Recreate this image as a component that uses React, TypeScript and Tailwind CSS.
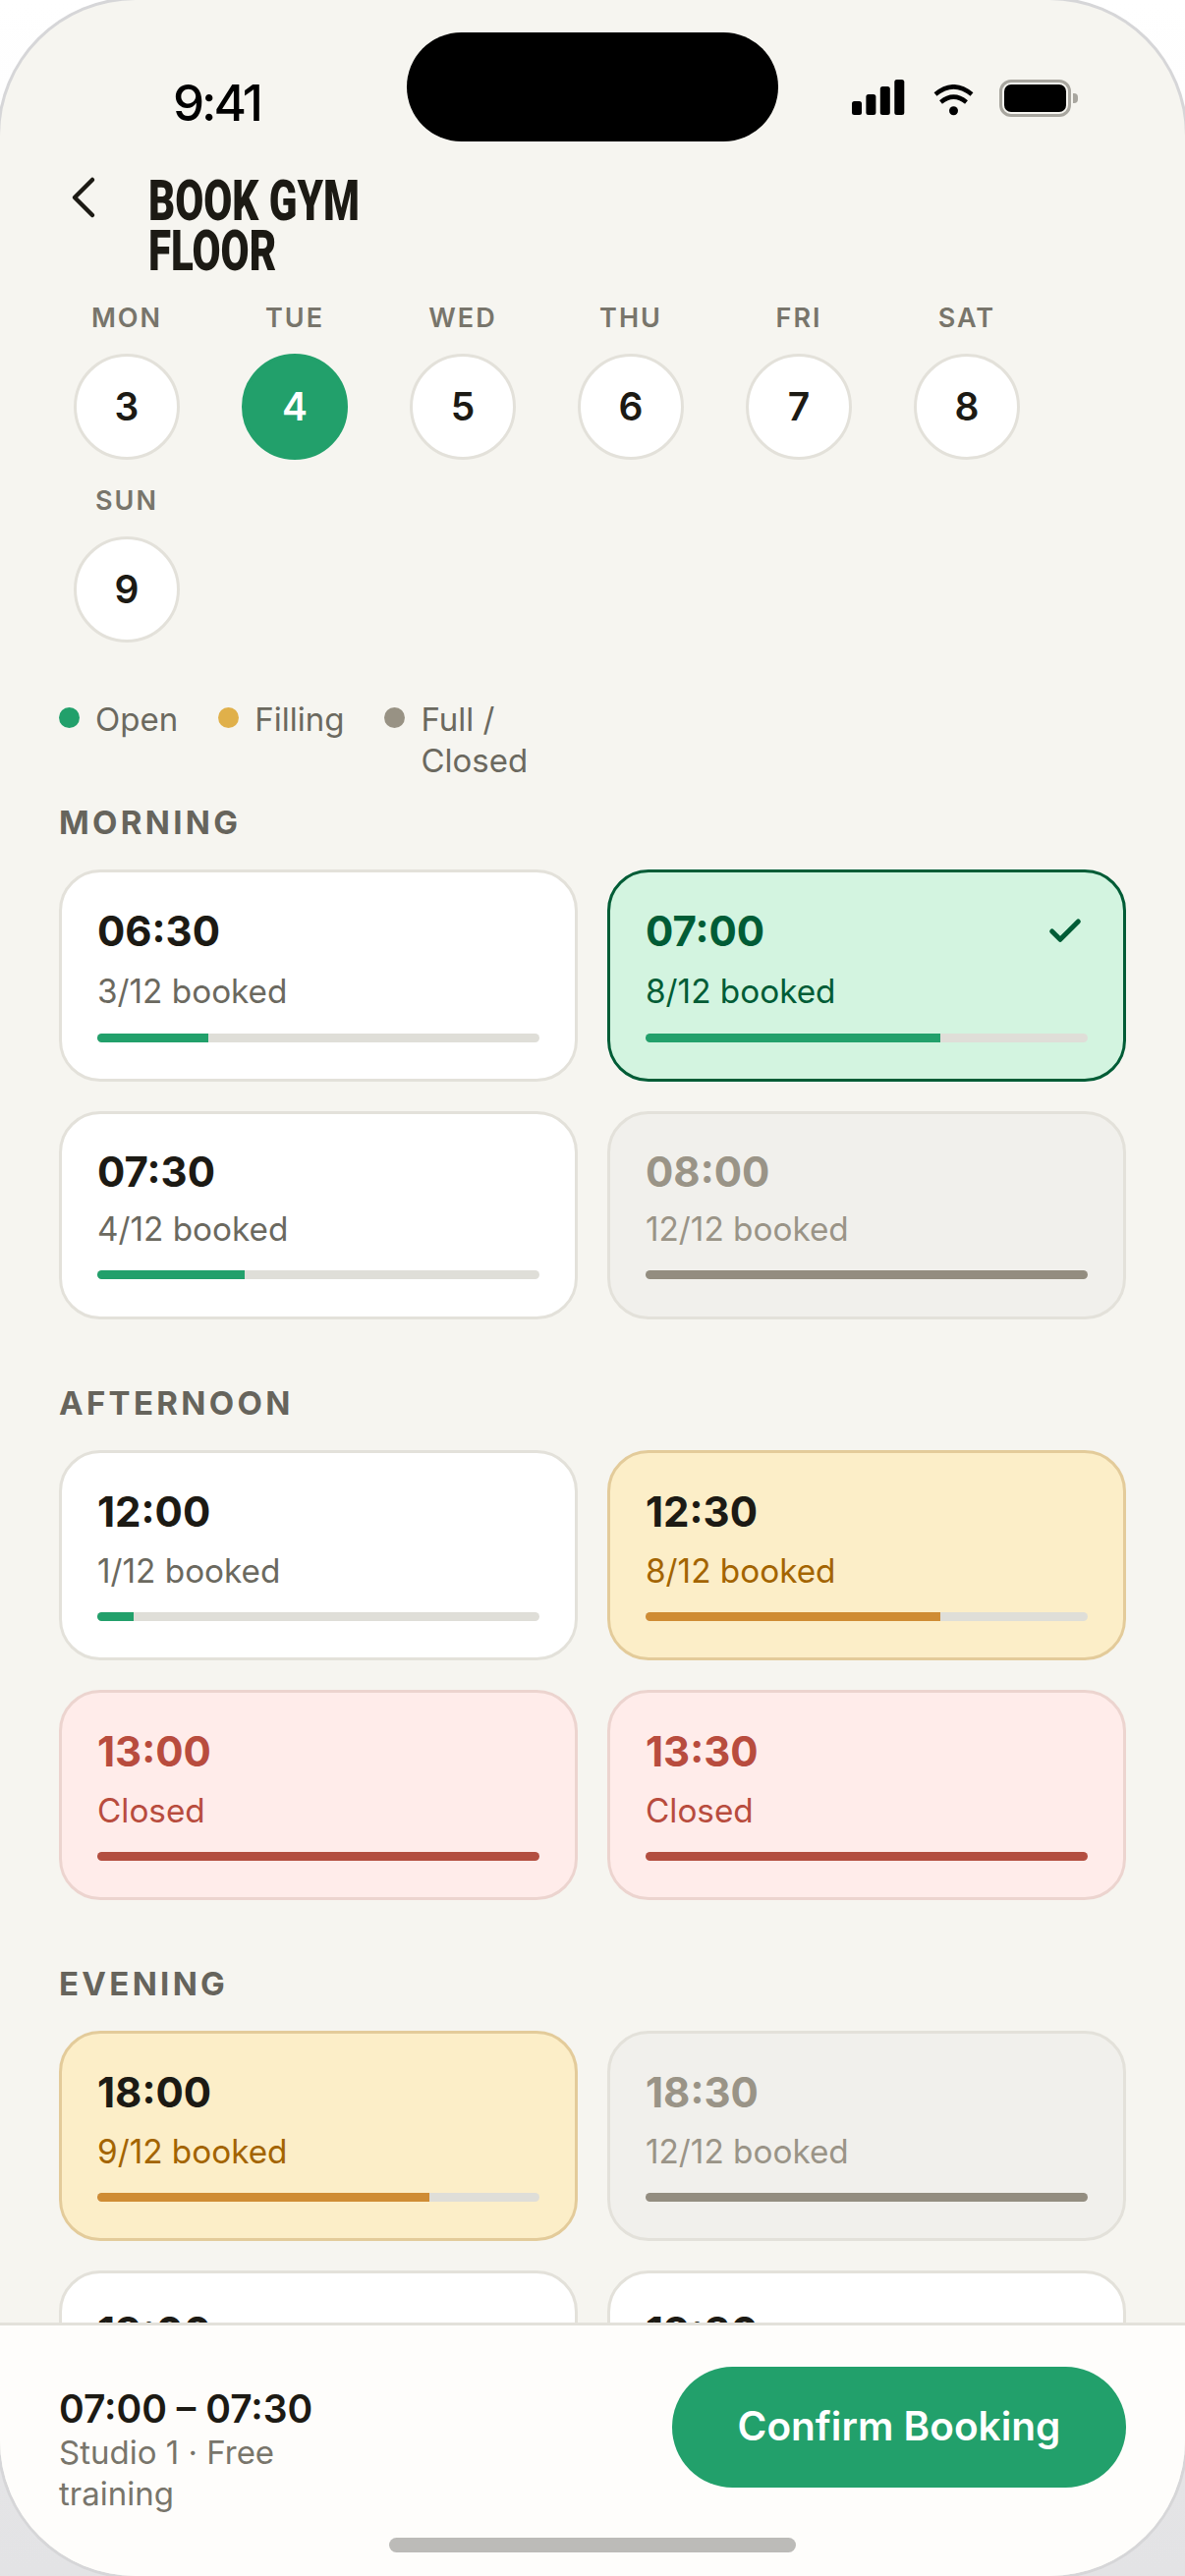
import { Check, ChevronLeft } from 'lucide-react'

type Tone = 'open' | 'picked' | 'filling' | 'closed' | 'full'

interface Slot {
  time: string
  note: string
  fill: number
  tone: Tone
  row?: 'tall' | 'tight'
}

const inter = 'font-["Inter","Liberation_Sans",sans-serif]'

const days = [
  ['MON', 3],
  ['TUE', 4],
  ['WED', 5],
  ['THU', 6],
  ['FRI', 7],
  ['SAT', 8],
  ['SUN', 9],
] as const

const sections: { title: string; slots: Slot[] }[] = [
  {
    title: 'MORNING',
    slots: [
      { time: '06:30', note: '3/12 booked', fill: 25, tone: 'open', row: 'tall' },
      { time: '07:00', note: '8/12 booked', fill: 66.67, tone: 'picked', row: 'tall' },
      { time: '07:30', note: '4/12 booked', fill: 33.33, tone: 'open', row: 'tight' },
      { time: '08:00', note: '12/12 booked', fill: 100, tone: 'full', row: 'tight' },
    ],
  },
  {
    title: 'AFTERNOON',
    slots: [
      { time: '12:00', note: '1/12 booked', fill: 8.33, tone: 'open' },
      { time: '12:30', note: '8/12 booked', fill: 66.67, tone: 'filling' },
      { time: '13:00', note: 'Closed', fill: 100, tone: 'closed' },
      { time: '13:30', note: 'Closed', fill: 100, tone: 'closed' },
    ],
  },
  {
    title: 'EVENING',
    slots: [
      { time: '18:00', note: '9/12 booked', fill: 75, tone: 'filling' },
      { time: '18:30', note: '12/12 booked', fill: 100, tone: 'full' },
      { time: '19:00', note: '5/12 booked', fill: 41.67, tone: 'open' },
      { time: '19:30', note: '2/12 booked', fill: 16.67, tone: 'open' },
    ],
  },
]

const toneStyles: Record<Tone, { card: string; time: string; note: string; bar: string }> = {
  open: { card: 'bg-white border-[#e3e1da]', time: 'text-[#1c1a14]', note: 'text-[#6b695f]', bar: 'bg-[#22a06b]' },
  picked: { card: 'bg-[#d3f4e0] border-[#005c36]', time: 'text-[#005c36]', note: 'text-[#005c36]', bar: 'bg-[#22a06b]' },
  filling: { card: 'bg-[#fceec8] border-[#e3cb9a]', time: 'text-[#1c1a14]', note: 'text-[#a36400]', bar: 'bg-[#cf8c34]' },
  closed: { card: 'bg-[#ffecea] border-[#ecd4cf]', time: 'text-[#b84c3e]', note: 'text-[#b84c3e]', bar: 'bg-[#b34e40]' },
  full: { card: 'bg-[#f1f0ec] border-[#e3e1da]', time: 'text-[#9a9487]', note: 'text-[#9a9487]', bar: 'bg-[#938d80]' },
}

function StatusBar() {
  return (
    <div className="flex h-[163px] shrink-0 items-start justify-between pl-[176px] pr-[109px]">
      <span className={`${inter} mt-[75px] text-[51px] leading-[60px] font-medium tracking-[-3px] text-black`}>9:41</span>
      <div className="mt-[81px] flex items-start">
        {/* signal bars */}
        <svg width="54" height="36" viewBox="0 0 54 36" className="mr-[29px]">
          <rect x="0" y="22" width="10" height="14" rx="2.5" />
          <rect x="14.400" y="15" width="10" height="21" rx="2.5" />
          <rect x="28.800" y="7" width="10" height="29" rx="2.5" />
          <rect x="43.300" y="0" width="10" height="36" rx="2.5" />
        </svg>
        {/* wifi */}
        <svg width="41" height="32" viewBox="0 0 41 32" fill="none" stroke="#000" strokeWidth="4.500" className="mt-[5px] mr-[26px]">
          <path d="M2 10Q20.500 -5.400 39 10" />
          <path d="M7.500 18Q20.500 7.300 33.500 18" />
          <circle cx="20.500" cy="26.700" r="4.500" fill="#000" stroke="none" />
        </svg>
        {/* battery */}
        <div className="flex items-center">
          <div className="flex h-[38px] w-[73px] rounded-[12px] border-[3.500px] border-[#a8a69f] p-[2px]">
            <div className="flex-1 rounded-[7px] bg-black" />
          </div>
          <div className="ml-[2px] h-[10px] w-[5px] rounded-r-[4px] bg-[#a8a69f]" />
        </div>
      </div>
    </div>
  )
}

function Header() {
  return (
    <div className="flex shrink-0 items-start pl-[49px]">
      <ChevronLeft className="mt-[2px] shrink-0 text-[#1c1a14]" size={72} strokeWidth={1.500} />
      <h1 className='mt-[16px] ml-[30px] origin-left scale-x-[0.73] font-["Roboto","Liberation_Sans",sans-serif] text-[57.700px] leading-[51px] font-black text-[#1c1a14]'>
        BOOK GYM
        <br />
        FLOOR
      </h1>
    </div>
  )
}

function DayStrip() {
  return (
    <div className="mt-[25px] flex flex-wrap gap-x-[33px] gap-y-[24px] px-[60px]">
      {days.map(([label, day]) => {
        const active = day === 4
        return (
          <div key={label} className="flex w-[138px] flex-col items-center">
            <span className={`${inter} text-[27px] leading-[36px] font-semibold tracking-[2px] text-[#78756b]`}>{label}</span>
            <div
              className={`${inter} mt-[18px] flex h-[108px] w-[108px] items-center justify-center rounded-full border-[3px] text-[39px] font-semibold ${
                active ? 'border-[#22a06b] bg-[#22a06b] text-white' : 'border-[#e3e1da] bg-white text-[#1c1a14]'
              }`}
            >
              {day}
            </div>
          </div>
        )
      })}
    </div>
  )
}

function Legend() {
  const items = [
    ['Open', 'bg-[#22a06b]', ''],
    ['Filling', 'bg-[#e0b04a]', ''],
    ['Full / Closed', 'bg-[#989284]', 'w-[120px]'],
  ]
  return (
    <div className={`${inter} mt-[57px] flex gap-x-[41px] px-[60px] text-[33px] leading-[42px] text-[#6b695f]`}>
      {items.map(([label, dot, width]) => (
        <div key={label} className="flex items-start gap-x-[16px]">
          <span className={`mt-[9px] h-[21px] w-[21px] shrink-0 rounded-full ${dot}`} />
          <span className={width}>{label}</span>
        </div>
      ))}
    </div>
  )
}

function SlotCard({ slot }: { slot: Slot }) {
  const s = toneStyles[slot.tone]
  const tight = slot.row === 'tight'
  const tall = slot.row === 'tall'
  const line = tight ? 'h-[50px]' : tall ? 'h-[53px]' : 'h-[52px]'
  const gap = tight ? 'mt-[13px]' : 'mt-[14px]'
  const bar = tall ? 'mt-[22px]' : 'mt-[21px]'
  return (
    <div className={`${inter} rounded-[42px] border-[3px] px-[36px] pt-[33px] ${tight ? 'pb-[38px]' : 'pb-[37px]'} ${s.card}`}>
      <div className={`flex items-center justify-between ${line}`}>
        <span className={`text-[42px] font-bold ${s.time}`}>{slot.time}</span>
        {slot.tone === 'picked' && <Check className="mr-[3px] text-[#005c36]" size={40} strokeWidth={3} />}
      </div>
      <div className={`${gap} text-[33.300px] leading-[42px] ${s.note}`}>{slot.note}</div>
      <div className={`${bar} h-[9px] overflow-hidden rounded-full bg-[#dfded8]`}>
        <div className={`h-full ${s.bar}`} style={{ width: `${slot.fill}%` }} />
      </div>
    </div>
  )
}

function Schedule() {
  return (
    <div className="mt-[22px] flex flex-col gap-y-[65px] px-[60px]">
      {sections.map(section => (
        <section key={section.title}>
          <h2 className={`${inter} text-[33px] leading-[40px] font-bold tracking-[3.300px] text-[#66645c]`}>{section.title}</h2>
          <div className="mt-[28px] grid grid-cols-2 gap-[30px]">
            {section.slots.map(slot => (
              <SlotCard key={slot.time} slot={slot} />
            ))}
          </div>
        </section>
      ))}
    </div>
  )
}

function Footer() {
  return (
    <div className={`${inter} flex h-[258px] shrink-0 items-start justify-between border-t-[3px] border-[#e3e1da] bg-[#fefdfb] px-[60px] pt-[42px]`}>
      <div className="mt-[21px] w-[300px]">
        <div className="text-[39px] leading-[44px] font-semibold text-[#1c1a14]">07:00 – 07:30</div>
        <div className="mt-px text-[33px] leading-[42px] text-[#78756b]">Studio 1 · Free training</div>
      </div>
      <button className="h-[123px] w-[462px] rounded-full bg-[#22a06b] text-[40.500px] font-semibold text-white">Confirm Booking</button>
    </div>
  )
}

export default function App() {
  return (
    <div className="h-[2622px] w-[1206px] overflow-hidden bg-gradient-to-b from-[#ffffff] to-[#e3e3e5]">
      <div className="relative flex h-full flex-col overflow-hidden rounded-[138px] bg-[#f6f5f0] ring-[3px] ring-[#d6d6d8]">
        {/* island and home bar float over the screen */}
        <div className="absolute top-[33px] left-[414px] h-[111px] w-[378px] rounded-full bg-black" />
        <StatusBar />
        <Header />
        <div className="min-h-0 flex-1 overflow-hidden">
          <DayStrip />
          <Legend />
          <Schedule />
        </div>
        <Footer />
        <div className="absolute bottom-[24px] left-[396px] h-[15px] w-[414px] rounded-full bg-[#bcbbb8]" />
      </div>
    </div>
  )
}
